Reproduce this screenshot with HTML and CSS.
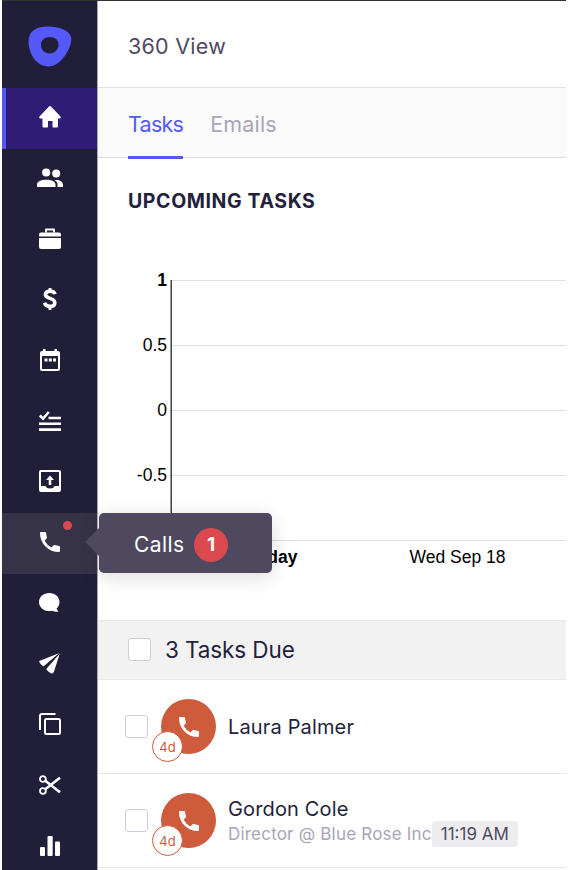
FILE: index.html
```html
<!DOCTYPE html>
<html lang="en">

<head>
    <meta charset="UTF-8">
    <meta name="viewport" content="width=device-width, initial-scale=1.0">
    <title>360 View</title>
    <link rel="stylesheet" href="styles.css">
</head>

<body>
    <svg class="defs" width="0" height="0">
        <symbol id="phone" viewBox="0 0 20 20">
            <path d="M0.7 0H5Q6 0 6.1 1Q6.2 3.3 7 5.2Q7.200 6 6.700 6.600L4.600 8.700Q7 13 11.400 15.400L13.500 13.300Q14.100 12.800 14.900 13.100Q16.800 13.800 19 13.900Q20 14 20 15V19Q20 20 19 20Q11 20 5.500 14.500Q0 9 0 1Q0 0 0.700 0Z" />
        </symbol>
    </svg>

    <div class="app">
        <nav class="sidebar">
            <a class="logo" href="#">
                <svg width="44" height="41" viewBox="0 0 44 41">
                    <path fill="#5459f8" fill-rule="evenodd" d="M20 0.500C30 0.500 43 4 43.300 13C43.500 22 33 40.500 20.500 40.500C7.500 40.500 0.500 26 0.500 15.500C0.500 4.500 9 0.500 20 0.500ZM22 11C16.500 11 13 14.500 13 19C13 23.500 16.500 27.500 21.500 27.500C26.500 27.500 30.500 23.500 30.500 18.500C30.500 14 27 11 22 11Z" />
                </svg>
            </a>
            <a class="nav-item active" href="#">
                <svg width="22" height="22" viewBox="0 0 22 22">
                    <path d="M10 0.500Q11 -0.400 12 0.500L21.500 10.500Q22.400 12.500 20.500 12.500H19V20.500Q19 21.500 18 21.500H14.500Q13.500 21.500 13.500 20.500V15H9V20.500Q9 21.500 8 21.500H4.500Q3.500 21.500 3.500 20.500V12.500H1.500Q-0.400 12.500 0.500 10.500Z" />
                </svg>
            </a>
            <a class="nav-item" href="#">
                <svg width="26" height="20" viewBox="0 0 26 20">
                    <circle cx="9.200" cy="4.500" r="4.100" />
                    <circle cx="19.200" cy="5.600" r="4" />
                    <path d="M0 19V16.500C0 13.500 4 11.700 9.300 11.700S18.500 13.500 18.500 16.500V19ZM17.500 12.200C22.500 11.600 26 13.700 26 17V19H20.500V16.500C20.500 14.500 19.500 13.200 17.500 12.200Z" />
                </svg>
            </a>
            <a class="nav-item" href="#">
                <svg width="22" height="21" viewBox="0 0 22 21">
                    <path d="M7 4.500V1.500H15V4.500" fill="none" stroke="#fff" stroke-width="1.900" stroke-linejoin="round" />
                    <path d="M2 4.500H20Q22 4.500 22 6.500V8.500H0V6.500Q0 4.500 2 4.500ZM0 9.900H22V19Q22 21 20 21H2Q0 21 0 19Z" />
                </svg>
            </a>
            <a class="nav-item" href="#">
                <svg class="line" width="14" height="24" viewBox="0 0 14 24">
                    <path stroke-width="3.600" d="M12 7.200C11.500 5 9.700 4.200 7.100 4.200C4.200 4.200 2.400 5.400 2.400 7.500C2.400 12.500 11.800 10.200 11.800 15.700C11.800 18.200 9.700 19.400 7 19.400C4.200 19.400 2.200 18.200 1.600 15.800" />
                    <path stroke-width="3" d="M7 1V4M7 19.500V23" />
                </svg>
            </a>
            <a class="nav-item" href="#">
                <svg width="20" height="22" viewBox="0 0 20 22">
                    <path fill-rule="evenodd" d="M3 0H5.500V2H14.500V0H17V2H18Q20 2 20 4V20Q20 22 18 22H2Q0 22 0 20V4Q0 2 2 2H3ZM2 7V20H18V7Z" />
                    <path d="M4.500 9.500H7.500V12.500H4.500ZM8.800 9.500H11.800V12.500H8.800ZM13 9.500H16V12.500H13Z" />
                </svg>
            </a>
            <a class="nav-item" href="#">
                <svg class="line" width="22" height="20" viewBox="0 0 22 20">
                    <path stroke-width="2.600" d="M0.800 4.500L4 7.600L9.800 1" />
                    <path stroke-width="2.600" d="M9.500 7H22M0 12.800H22M0 18.600H22" />
                </svg>
            </a>
            <a class="nav-item" href="#">
                <svg width="22" height="22" viewBox="0 0 22 22">
                    <path fill-rule="evenodd" d="M2 0H20Q22 0 22 2V20Q22 22 20 22H2Q0 22 0 20V2Q0 0 2 0ZM2 2V16H6.500Q7.500 18.500 11 18.500T15.500 16H20V2Z" />
                    <path d="M11 5.500L15 10H12.300V15H9.700V10H7Z" />
                </svg>
            </a>
            <a class="nav-item hovered" href="#">
                <svg width="20" height="20"><use href="#phone" /></svg>
                <span class="dot"></span>
                <span class="tooltip">Calls <span class="count">1</span></span>
            </a>
            <a class="nav-item" href="#">
                <svg width="21" height="20" viewBox="0 0 21 20">
                    <path d="M10.300 0C16 0 20.500 3.800 20.500 9C20.500 11.700 19.500 13.800 17.500 15.500Q18.200 17.500 19.500 18.500Q16 19.500 13.500 17.700C6 19.500 0 15 0 9C0 3.800 4.600 0 10.300 0Z" />
                </svg>
            </a>
            <a class="nav-item" href="#">
                <svg width="21" height="21" viewBox="0 0 21 21">
                    <path d="M20 0.200L5 13Q4.200 13.500 3.400 12.700Q1 10.800 0.200 8.800Q0 8 0.800 7.700Z" />
                    <path d="M20.800 0.600L15 18.500Q14 21 12.500 20.500Q10 19.500 7.800 17Q7.200 16.300 7.700 15.500Z" />
                </svg>
            </a>
            <a class="nav-item" href="#">
                <svg class="line" width="22" height="22" viewBox="0 0 22 22">
                    <rect x="6" y="6" width="15" height="15" rx="1.500" stroke-width="2" />
                    <path stroke-width="2" d="M16.500 1H3Q1 1 1 3V17" />
                </svg>
            </a>
            <a class="nav-item" href="#">
                <svg class="line" width="22" height="20" viewBox="0 0 22 20">
                    <circle cx="3.900" cy="4" r="2.900" stroke-width="1.800" />
                    <circle cx="3.900" cy="16" r="2.900" stroke-width="1.800" />
                    <path stroke-width="2.600" d="M6 5.500L11 9.500L21 17.300M6 14.500L11 10.500L21 2.700" />
                </svg>
            </a>
            <a class="nav-item" href="#">
                <svg width="20" height="20" viewBox="0 0 20 20">
                    <rect x="0" y="11" width="5" height="9" rx="1" />
                    <rect x="7.500" y="0" width="5.200" height="20" rx="1" />
                    <rect x="15" y="5.500" width="5" height="14.500" rx="1" />
                </svg>
            </a>
        </nav>

        <main class="content">
            <header class="topbar">
                <h1>360 View</h1>
            </header>
            <div class="tabs">
                <a class="tab selected" href="#">Tasks</a>
                <a class="tab" href="#">Emails</a>
            </div>

            <section class="upcoming">
                <h2>UPCOMING TASKS</h2>
                <svg class="chart" width="468" height="320" viewBox="0 0 468 320">
                    <path class="grid" d="M73 20.500H468M73 85.500H468M73 150.500H468M73 215.500H468M73 280.500H468" />
                    <path class="axis" d="M73.200 20V280" />
                    <g text-anchor="end">
                        <text class="bold" x="69" y="26">1</text>
                        <text x="69" y="91">0.5</text>
                        <text x="69" y="156">0</text>
                        <text x="69" y="221">-0.5</text>
                        <text class="bold" x="199.500" y="303">Today</text>
                    </g>
                    <text x="311.500" y="303">Wed Sep 18</text>
                </svg>
            </section>

            <section class="tasks">
                <div class="tasks-header">
                    <span class="checkbox"></span>
                    <h3>3 Tasks Due</h3>
                </div>
                <div class="task">
                    <span class="checkbox"></span>
                    <div class="avatar">
                        <svg width="20" height="20"><use href="#phone" /></svg>
                        <span class="overdue">4d</span>
                    </div>
                    <div class="info">
                        <div class="name">Laura Palmer</div>
                    </div>
                </div>
                <div class="task">
                    <span class="checkbox"></span>
                    <div class="avatar">
                        <svg width="20" height="20"><use href="#phone" /></svg>
                        <span class="overdue">4d</span>
                    </div>
                    <div class="info">
                        <div class="name">Gordon Cole</div>
                        <div class="details">
                            <span class="role">Director @ Blue Rose Inc</span>
                            <span class="time">11:19 AM</span>
                        </div>
                    </div>
                </div>
            </section>
        </main>
    </div>
</body>

</html>
```
FILE: styles.css
```css
* {
    box-sizing: border-box;
}

body {
    margin: 0;
    height: 870px;
    overflow: hidden;
    background: white;
    color: #231f3c;
    font-family: Inter, "Liberation Sans", sans-serif;
}

a {
    color: inherit;
    text-decoration: none;
}

h1,
h2,
h3 {
    margin: 0;
    font-weight: 400;
}

.defs {
    position: absolute;
}

.app {
    display: flex;
    width: 564px;
    height: 870px;
    margin-left: 2px;
    border-top: 1px solid #343238;
}

/* sidebar */
.sidebar {
    width: 96px;
    flex-shrink: 0;
    background: #211e3a;
    border-right: 1px solid #aaa8b4;
}

.logo {
    display: flex;
    align-items: center;
    justify-content: center;
    height: 87px;
    padding-top: 4px;
}

.nav-item {
    position: relative;
    display: flex;
    align-items: center;
    justify-content: center;
    height: 60.7px;
    padding-bottom: 2px;
    fill: white;
}

.line {
    fill: none;
    stroke: white;
}

.active {
    background: #2e1c75;
}

.active::before {
    content: "";
    position: absolute;
    left: 0;
    top: 0;
    width: 4px;
    height: 100%;
    background: #5459f8;
}

.hovered {
    background: #363349;
}

.dot {
    position: absolute;
    left: 61px;
    top: 8px;
    width: 9px;
    height: 9px;
    border-radius: 50%;
    background: #db494f;
}

.tooltip {
    position: absolute;
    z-index: 2;
    left: 97px;
    top: 0;
    display: flex;
    align-items: center;
    gap: 10px;
    width: 173px;
    height: 60px;
    padding: 4px 0 0 35px;
    border-radius: 5px;
    background: #4e495f;
    box-shadow: 0 4px 20px rgba(0, 0, 0, 0.14);
    color: white;
    font-size: 21px;
    letter-spacing: 0.4px;
}

.tooltip::before {
    content: "";
    position: absolute;
    left: -14px;
    top: 15px;
    border: 14px solid transparent;
    border-left: none;
    border-right-color: #4e495f;
}

.count {
    width: 34px;
    height: 34px;
    border-radius: 50%;
    background: #db494f;
    font-size: 19px;
    font-weight: 700;
    line-height: 34px;
    text-align: center;
}

/* main content */
.content {
    flex: 1;
    min-width: 0;
}

.topbar {
    display: flex;
    align-items: center;
    height: 87px;
    padding: 3px 0 0 30px;
    border-bottom: 1px solid #dfdfe3;
}

.topbar h1 {
    color: #4e495f;
    font-size: 21.5px;
    letter-spacing: 0.25px;
}

.tabs {
    display: flex;
    gap: 27px;
    height: 70px;
    padding-left: 30px;
    background: #fafafa;
    border-bottom: 1px solid #dfdfe3;
}

.tab {
    height: 71px;
    color: #a9a5b9;
    font-size: 21.5px;
    letter-spacing: 0.2px;
    line-height: 72px;
}

.selected {
    color: #5459f8;
    border-bottom: 3px solid #5459f8;
    letter-spacing: -0.75px;
}

.upcoming {
    height: 462px;
}

.upcoming h2 {
    height: 102px;
    padding: 31px 0 0 30px;
    font-size: 19.5px;
    font-weight: 700;
    letter-spacing: 0.6px;
    line-height: 24px;
}

.chart {
    display: block;
    font-family: "Liberation Sans", Arial, sans-serif;
    font-size: 17.5px;
}

.bold {
    font-weight: 700;
}

.grid {
    stroke: #e0e0e0;
}

.axis {
    stroke: #333;
    stroke-width: 1.4;
}

.tasks-header {
    display: flex;
    align-items: center;
    gap: 14px;
    height: 60px;
    padding: 0 0 1px 30px;
    background: #f2f2f2;
    border-bottom: 1px solid #e8e8ea;
    border-top: 1px solid #e8e8ea;
}

.tasks-header h3 {
    font-size: 22.5px;
    letter-spacing: -0.1px;
}

.checkbox {
    width: 23px;
    height: 23px;
    flex-shrink: 0;
    background: white;
    border: 1px solid #cfcdd8;
    border-radius: 3px;
}

.task {
    display: flex;
    align-items: center;
    height: 94px;
    padding-left: 27px;
    border-bottom: 1px solid #e8e8ea;
}

.avatar {
    position: relative;
    display: flex;
    align-items: center;
    justify-content: center;
    width: 55px;
    height: 55px;
    margin: 0 12px 0 13px;
    border-radius: 50%;
    background: #cd5b3c;
    fill: white;
}

.overdue {
    position: absolute;
    left: -9px;
    top: 32px;
    width: 31px;
    height: 31px;
    border: 1px solid #cd5b3c;
    border-radius: 50%;
    background: white;
    color: #cd5b3c;
    font-size: 13px;
    line-height: 30px;
    text-align: center;
}

.name {
    font-size: 20px;
    letter-spacing: 0.15px;
    line-height: 26px;
}

.details {
    display: flex;
    align-items: center;
    height: 24px;
    white-space: nowrap;
}

.role {
    color: #a9a5b9;
    font-size: 17px;
    letter-spacing: 0.2px;
}

.time {
    height: 26px;
    padding: 0 9px;
    border-radius: 3px;
    background: #ededf0;
    color: #4e495f;
    font-size: 17px;
    line-height: 27px;
}
```
